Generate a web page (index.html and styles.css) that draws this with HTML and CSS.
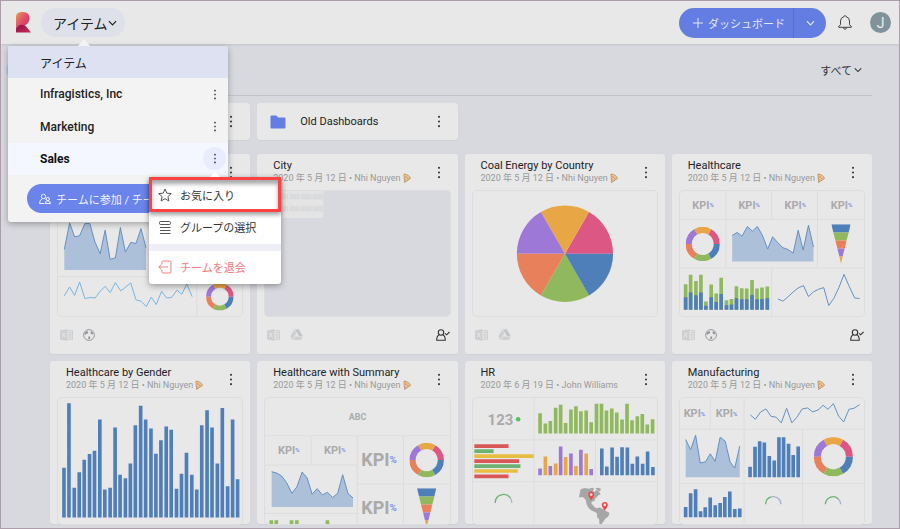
FILE: index.html
```html
<!DOCTYPE html>
<html lang="ja">
<head>
<meta charset="utf-8">
<meta name="viewport" content="width=device-width, initial-scale=1">
<title>アイテム</title>
<link rel="stylesheet" href="styles.css">
</head>
<body>
<svg class="sprite" aria-hidden="true">
  <defs>
    <linearGradient id="logo-top" x1="0" y1="0" x2="1" y2="1"><stop offset="0" stop-color="#e9a052"/><stop offset=".45" stop-color="#e0526a"/><stop offset="1" stop-color="#c9286a"/></linearGradient>
    <linearGradient id="logo-leg" x1="0" y1="0" x2="1" y2="1"><stop offset="0" stop-color="#8c1244"/><stop offset="1" stop-color="#d02a55"/></linearGradient>
  </defs>
  <symbol id="kebab" viewBox="0 0 4 14"><circle cx="2" cy="2" r="1.1"/><circle cx="2" cy="7" r="1.1"/><circle cx="2" cy="12" r="1.1"/></symbol>
  <symbol id="chevron" viewBox="0 0 10 6"><path d="M1 1l4 4 4-4" fill="none" stroke="currentColor" stroke-width="1.3"/></symbol>
  <symbol id="folder" viewBox="0 0 16 14"><path d="M1.500 .5h5l1.500 2h6.500a1 1 0 0 1 1 1v9a1 1 0 0 1-1 1h-13a1 1 0 0 1-1-1v-11a1 1 0 0 1 1-1z"/></symbol>
  <symbol id="pizza" viewBox="0 0 8 11"><path d="M1 1q5.500.8 6.500 4.500L1.500 9.500z" fill="#ecc795" stroke="#bd9366" stroke-width=".9"/><circle cx="3" cy="4" r=".8" fill="#cf8265"/><circle cx="4.800" cy="5.500" r=".7" fill="#cf8265"/><circle cx="2.800" cy="7" r=".6" fill="#cf8265"/></symbol>
  <symbol id="excel" viewBox="0 0 13 12"><path d="M0 1.500L7.500 0v12L0 10.500z" fill="#cdcfd1"/><path d="M2 3.800l3.300 4.400M5.300 3.800L2 8.200" stroke="#e8e8e8" stroke-width="1"/><path d="M7.500 1.600h5v8.800h-5" fill="none" stroke="#cdcfd1"/><path d="M8 3.800h4M8 6h4M8 8.200h4M10 2v8" stroke="#cdcfd1" stroke-width=".9"/></symbol>
  <symbol id="drive" viewBox="0 0 13 12"><path d="M4.300.5L.3 7.300l2 3.700 4.100-7z" fill="#cdcfd1"/><path d="M4.900.3h3.800l4 6.600H8.900z" fill="#c3c5c8"/><path d="M5 7.600h7.800L10.900 11H3.100z" fill="#cdcfd1"/></symbol>
  <symbol id="globe" viewBox="0 0 12 12"><circle cx="6" cy="6" r="5.400" fill="none" stroke="#8f9297" stroke-width=".9"/><path d="M2.200 3.200l2-1.200 1 1.100-.5 1.300-1.300.4L2.400 6 1.500 5zM7.800 2.200l1.800.8.6 2-1.200.5L7.500 4.300zM5.700 7.200l1.600.5-.2 1.800-1.300 1-.7-1.400z" fill="#8f9297"/></symbol>
  <symbol id="user-check" viewBox="0 0 14 12"><g fill="none" stroke="#333" stroke-width="1.100"><circle cx="5" cy="3.500" r="2.700"/><path d="M3 6Q.7 7 .7 11.300h8.600Q9.300 7 7 6M9 4.300l1.600 1.500L13.500 3"/></g></symbol>
  <symbol id="donut" viewBox="-50 -50 100 100"><g fill="none" stroke-width="18"><path stroke="#dc5784" d="M41 0A41 41 0 0 0 20.500 -35.500"/><path stroke="#e9a645" d="M20.500 -35.500A41 41 0 0 0 -20.500 -35.500"/><path stroke="#9d78d6" d="M-20.500 -35.500A41 41 0 0 0 -41 0"/><path stroke="#e9805c" d="M-41 0A41 41 0 0 0 -20.500 35.500"/><path stroke="#8fb95c" d="M-20.500 35.500A41 41 0 0 0 20.500 35.500"/><path stroke="#4f7fb9" d="M20.500 35.500A41 41 0 0 0 41 0"/></g></symbol>
  <symbol id="funnel" viewBox="0 0 58 119"><path fill="#4f7fb9" d="M0 0h58l-6 25H6z"/><path fill="#8fb95c" d="M6 25h46l-6 24H12z"/><path fill="#e9805c" d="M12 49h34l-6 24H18z"/><path fill="#9d78d6" d="M18 73h22l-6 24H24z"/><path fill="#e9a645" d="M24 97h10l-5 22z"/></symbol>
</svg>

<div class="app">
  <header class="topbar">
    <svg class="logo" viewBox="0 0 15 21" role="img" aria-label="ロゴ"><path d="M0 18V5Q0 0 6 0h1q6.500 0 6.500 6.300 0 4.700-4 6.700L0 18z" fill="url(#logo-top)"/><path d="M0 20.500V17q2-4 6-4.200 3 0 4.500 2.200l4.500 5.500z" fill="url(#logo-leg)"/></svg>
    <div class="switcher">
      <button class="switch-btn" type="button" aria-expanded="true">アイテム<svg class="chev" aria-hidden="true"><use href="#chevron"/></svg></button>
      <nav class="menu" aria-label="ワークスペース">
        <ul class="menu-list">
          <li class="menu-row current"><a href="#items">アイテム</a></li>
          <li class="menu-row"><a href="#infragistics">Infragistics, Inc</a><button class="row-more" type="button" aria-label="その他"><svg class="dots"><use href="#kebab"/></svg></button></li>
          <li class="menu-row"><a href="#marketing">Marketing</a><button class="row-more" type="button" aria-label="その他"><svg class="dots"><use href="#kebab"/></svg></button></li>
          <li class="menu-row active"><a href="#sales">Sales</a><button class="row-more on" type="button" aria-label="その他" aria-expanded="true"><svg class="dots"><use href="#kebab"/></svg></button></li>
        </ul>
        <button class="join" type="button"><svg class="join-icon" viewBox="0 0 12 12" aria-hidden="true"><g fill="none" stroke="currentColor"><circle cx="4.500" cy="3.500" r="2.200"/><path d="M5.500 10.500h-5Q.5 7 3.200 5.800M5.500 5.600l1 .8"/><circle cx="8.800" cy="6" r="1.600"/><path d="M6.300 10.500q0-2.700 2.500-2.700t2.700 2.700z"/></g></svg>チームに参加 / チーム</button>
        <div class="popover">
          <button class="pop-item marked" type="button"><svg viewBox="0 0 14 14" aria-hidden="true"><path d="M7 1l1.800 4.200 4.500.4-3.400 3 1 4.400L7 10.700 3.100 13l1-4.400-3.400-3 4.500-.4z"/></svg>お気に入り</button>
          <button class="pop-item" type="button"><svg viewBox="0 0 14 14" aria-hidden="true"><rect x="1.500" y="1.500" width="11" height="3" rx="1"/><path d="M2 7.500h10.500M2 10.500h10.500M2 13.500h10.500"/></svg>グループの選択</button>
          <button class="pop-item leave" type="button"><svg viewBox="0 0 14 14" aria-hidden="true"><path d="M4 4V2.200Q4 1 5.200 1h6.600Q13 1 13 2.200v9.600Q13 13 11.800 13H5.200Q4 13 4 11.800V10M10 7H.8M3.500 4.300L.8 7l2.700 2.700"/></svg>チームを退会</button>
        </div>
      </nav>
    </div>
    <div class="actions">
      <div class="split">
        <button class="new" type="button"><svg class="plus" viewBox="0 0 10 10" aria-hidden="true"><path d="M5 0v10M0 5h10" stroke="currentColor"/></svg>ダッシュボード</button>
        <button class="new-more" type="button" aria-label="その他の作成"><svg class="chev"><use href="#chevron"/></svg></button>
      </div>
      <button class="bell" type="button" aria-label="通知"><svg viewBox="0 0 14 15"><path d="M7 .6q.9 0 1 1Q11.500 2.500 11.500 6v3.500q0 1 1.800 1.800v1H.7v-1q1.800-.8 1.800-1.800V6Q2.500 2.500 6 1.600q.1-1 1-1zM5.300 12.500q.3 1.700 1.700 1.700t1.700-1.700" fill="none" stroke="#333" stroke-width=".9"/></svg></button>
      <button class="avatar" type="button">J</button>
    </div>
  </header>

  <main>
    <div class="toolbar"><span class="knob"></span><button class="filter" type="button">すべて<svg class="chev" aria-hidden="true"><use href="#chevron"/></svg></button></div>
    <div class="content">
      <section class="grid folders">
        <article class="folder"><svg class="folder-icon"><use href="#folder"/></svg><button class="more" type="button" aria-label="その他"><svg class="dots"><use href="#kebab"/></svg></button></article>
        <article class="folder"><svg class="folder-icon"><use href="#folder"/></svg><h2>Old Dashboards</h2><button class="more" type="button" aria-label="その他"><svg class="dots"><use href="#kebab"/></svg></button></article>
      </section>

      <section class="grid">
        <article class="card">
          <header class="head"><div></div><button class="more" type="button" aria-label="その他"><svg class="dots"><use href="#kebab"/></svg></button></header>
          <svg class="thumb" viewBox="22 -56 555 378">
            <path class="rule" d="M22 202H578M440 202V322"/>
            <path class="area" d="M41 182V120L57 40 72 82 87 79 103 42H118L133 97 149 133 164 62 179 150 195 145 210 54 225 128 241 99 257 102 272 57 287 115V182z"/>
            <path class="line" d="M41 120L57 40 72 82 87 79 103 42H118L133 97 149 133 164 62 179 150 195 145 210 54 225 128 241 99 257 102 272 57 287 115"/>
            <path class="line light" d="M41 260L57 233 72 259 87 218 103 268 118 265 134 266 149 246 164 231 179 250 195 220 211 245 241 221 257 272 272 276 288 292 303 264 318 286 334 246 349 266 364 265 380 243 395 255 410 224 426 262"/>
            <use href="#donut" x="468" y="221" width="83" height="83"/>
          </svg>
          <footer class="foot"><svg class="excel"><use href="#excel"/></svg><svg class="globe"><use href="#globe"/></svg></footer>
        </article>

        <article class="card">
          <header class="head"><div><h2>City</h2><p>2020 年 5 月 12 日 • Nhi Nguyen <svg class="pizza"><use href="#pizza"/></svg></p></div><button class="more" type="button" aria-label="その他"><svg class="dots"><use href="#kebab"/></svg></button></header>
          <svg class="thumb plain" viewBox="28 288 555 378">
            <path fill="#e4e4e4" d="M28 288H204V369H28z"/>
            <path stroke="#dadbdd" stroke-width="17" d="M28 305H204M28 341H204"/>
            <path stroke="#e4e4e4" stroke-width="3" d="M64 288V369M99 288V369M135 288V369M170 288V369"/>
          </svg>
          <footer class="foot"><svg class="excel"><use href="#excel"/></svg><svg class="drive"><use href="#drive"/></svg><svg class="shared"><use href="#user-check"/></svg></footer>
        </article>

        <article class="card">
          <header class="head"><div><h2>Coal Energy by Country</h2><p>2020 年 5 月 12 日 • Nhi Nguyen <svg class="pizza"><use href="#pizza"/></svg></p></div><button class="more" type="button" aria-label="その他"><svg class="dots"><use href="#kebab"/></svg></button></header>
          <svg class="thumb" viewBox="37 124 555 378">
            <g transform="translate(314 313)">
              <path fill="#dc5784" d="M0 0H145A145 145 0 0 0 72.500 -125.600z"/><path fill="#e9a645" d="M0 0L72.500 -125.600A145 145 0 0 0 -72.500 -125.600z"/><path fill="#9d78d6" d="M0 0L-72.500 -125.600A145 145 0 0 0 -145 0z"/><path fill="#e9805c" d="M0 0H-145A145 145 0 0 0 -72.500 125.600z"/><path fill="#8fb95c" d="M0 0L-72.500 125.600A145 145 0 0 0 72.500 125.600z"/><path fill="#4f7fb9" d="M0 0L72.500 125.600A145 145 0 0 0 145 0z"/>
            </g>
          </svg>
          <footer class="foot"><svg class="excel"><use href="#excel"/></svg><svg class="drive"><use href="#drive"/></svg></footer>
        </article>

        <article class="card">
          <header class="head"><div><h2>Healthcare</h2><p>2020 年 5 月 12 日 • Nhi Nguyen <svg class="pizza"><use href="#pizza"/></svg></p></div><button class="more" type="button" aria-label="その他"><svg class="dots"><use href="#kebab"/></svg></button></header>
          <svg class="thumb" viewBox="43 124 555 378">
            <path class="rule" d="M43 210H598M43 356H598M181 124V356M319 124V210M319 356V502M457 124V356"/>
            <text class="kpi" x="80" y="178">KPI<tspan dy="-5">%</tspan></text><text class="kpi" x="219" y="178">KPI<tspan dy="-5">%</tspan></text><text class="kpi" x="358" y="178">KPI<tspan dy="-5">%</tspan></text><text class="kpi" x="497" y="178">KPI<tspan dy="-5">%</tspan></text>
            <use href="#donut" x="60" y="232" width="103" height="103"/>
            <path class="area" d="M200 336V258L215 249 230 260 246 231 261 245 276 231 291 257 307 299 322 262 337 279 353 295 368 300 384 311 399 242 414 302 430 227 445 293V336z"/>
            <path class="line" d="M200 258L215 249 230 260 246 231 261 245 276 231 291 257 307 299 322 262 337 279 353 295 368 300 384 311 399 242 414 302 430 227 445 293"/>
            <use href="#funnel" x="499" y="224" width="58" height="119"/>
            <path class="bar green" d="M60 482V405M75 482V376M91 482V395M106 482V376M121 482V457M137 482V406M152 482V433M167 482V385M183 482V453M198 482V449M213 482V411M229 482V417M244 482V418M260 482V392M275 482V418M290 482V415M306 482V412"/>
            <path class="bar" d="M60 482V444M75 482V430M91 482V438M106 482V430M121 482V470M137 482V444M152 482V458M167 482V434M183 482V468M198 482V466M213 482V447M229 482V450M244 482V450M260 482V437M275 482V450M290 482V449M306 482V447"/>
            <path class="line" d="M338 449L353 456 368 443 384 428 399 416 415 409 430 442 445 428 460 420 476 415 491 469 506 448 522 414 537 375 553 412 569 446 584 448"/>
          </svg>
          <footer class="foot"><svg class="excel"><use href="#excel"/></svg><svg class="globe"><use href="#globe"/></svg><svg class="shared"><use href="#user-check"/></svg></footer>
        </article>

        <article class="card">
          <header class="head"><div><h2>Healthcare by Gender</h2><p>2020 年 5 月 12 日 • Nhi Nguyen <svg class="pizza"><use href="#pizza"/></svg></p></div><button class="more" type="button" aria-label="その他"><svg class="dots"><use href="#kebab"/></svg></button></header>
          <svg class="thumb" viewBox="38 130 555 378">
            <path class="bar" d="M56 490V340M71 490V146M87 490V400M102 490V354M117 490V316M133 490V299M148 490V289M164 490V195M179 490V406M195 490V400M210 490V219M225 490V361M241 490V372M256 490V327M271 490V212M287 490V153M302 490V195M318 490V222M333 490V298M348 490V257M364 490V216M379 490V226M395 490V403M410 490V358M425 490V295M441 490V361M456 490V406M471 490V212M487 490V167M502 490V219M518 490V327M533 490V160M549 490V396M564 490V195M579 490V375"/>
          </svg>
        </article>

        <article class="card">
          <header class="head"><div><h2>Healthcare with Summary</h2><p>2020 年 5 月 12 日 • Nhi Nguyen <svg class="pizza"><use href="#pizza"/></svg></p></div><button class="more" type="button" aria-label="その他"><svg class="dots"><use href="#kebab"/></svg></button></header>
          <svg class="thumb" viewBox="28 235 555 378">
            <path class="rule" d="M28 349H583M306 349V613M445 349V613M167 349V437M28 437H306M28 583H306M306 494H583"/>
            <text class="abc" x="280" y="302">ABC</text>
            <text class="kpi" x="67" y="403">KPI<tspan dy="-5">%</tspan></text><text class="kpi" x="206" y="403">KPI<tspan dy="-5">%</tspan></text>
            <text class="kpi big" x="318" y="441">KPI<tspan dy="-9">%</tspan></text><text class="kpi big" x="318" y="585">KPI<tspan dy="-9">%</tspan></text>
            <path class="area" d="M48 563V457L63 461 78 470 93 490 109 522 124 503 140 458 155 476 170 525 185 508 201 527 216 519 232 535 247 522 262 466 278 523 293 536V563z"/>
            <path class="line" d="M48 457L63 461 78 470 93 490 109 522 124 503 140 458 155 476 170 525 185 508 201 527 216 519 232 535 247 522 262 466 278 523 293 536"/>
            <use href="#donut" x="463" y="370" width="104" height="104"/>
            <use href="#funnel" x="486" y="507" width="58" height="119"/>
            <path class="bar green" d="M47 620V603M62 620V603M108 620V603M124 620V603M216 620V603"/>
          </svg>
        </article>

        <article class="card">
          <header class="head"><div><h2>HR</h2><p>2020 年 6 月 19 日 • John Williams</p></div><button class="more" type="button" aria-label="その他"><svg class="dots"><use href="#kebab"/></svg></button></header>
          <svg class="thumb" viewBox="31 130 555 378">
            <path class="rule" d="M31 256H586M31 382H586M215 130V508M400 256V382"/>
            <text class="count" x="75" y="210">123</text><circle cx="167" cy="194" r="7" fill="#56c15e"/>
            <path class="bar green" d="M233 237V176M249 237V207M264 237V199M280 237V159M295 237V150M310 237V205M326 237V165M341 237V155M356 237V170M372 237V168M387 237V203M403 237V147M418 237V147M433 237V168M449 237V162M464 237V174M480 237V195M495 237V147M510 237V197M526 237V185M541 237V178M556 237V210M572 237V194"/>
            <path class="bar red" d="M35 275H138M35 320H170M35 366H138"/><path class="bar leaf" d="M35 290H93M35 335H174"/><path class="bar yellow" d="M35 305H214M35 350H166"/>
            <path class="bar purple" d="M233 363V342M264 363V335M295 363V276M326 363V297M356 363V286M387 363V344"/><path class="bar orange" d="M249 363V306M280 363V327M310 363V308M341 363V335M372 363V297"/>
            <path class="bar" d="M419 363V282M434 363V336M450 363V279M465 363V307M480 363V278M496 363V279M511 363V328M526 363V306M542 363V328M557 363V291M573 363V338"/>
            <path class="gauge" d="M98 446A25 25 0 0 1 144 432"/><path class="gauge rest" d="M144 432Q148 438 148 446"/>
            <path fill="#a6a6a6" d="M355 405l12-4 12 2 12-3 5 4-4 6 4 4 6-6 6 1 4 6 4 5-6 2-6 6-6 6-1 6-5 1-5 3 2 6 4 3 4 6 7 3 8-2 12 5 9 6 9 5-2 8-5 6-6 4-4 7-5 5-1 10-3 2-4-8-1-14-7-9 1-9-8-5-9-4-8-7-7-12-2-13-7-7-7-2-7 2z"/>
            <path fill="#a6a6a6" d="M399 402l10-2 8 4-4 7-7-3z"/>
            <g fill="#ea4b4b"><path d="M387 438q-9-11-9-17a9 9 0 0 1 18 0q0 6-9 17z"/><path d="M428 469q-9-11-9-17a9 9 0 0 1 18 0q0 6-9 17z"/></g><circle cx="387" cy="421" r="4" fill="#e8e8e8"/><circle cx="428" cy="452" r="4" fill="#e8e8e8"/>
          </svg>
        </article>

        <article class="card">
          <header class="head"><div><h2>Manufacturing</h2><p>2020 年 5 月 12 日 • Nhi Nguyen <svg class="pizza"><use href="#pizza"/></svg></p></div><button class="more" type="button" aria-label="その他"><svg class="dots"><use href="#kebab"/></svg></button></header>
          <svg class="thumb" viewBox="43 130 555 378">
            <path class="rule" d="M43 224H598M43 388H598M134 130V224M236 130V508M412 224V508"/>
            <text class="kpi" x="54" y="188">KPI<tspan dy="-5">%</tspan></text><text class="kpi" x="151" y="188">KPI<tspan dy="-5">%</tspan></text>
            <path class="line" d="M255 181L270 194 286 172 302 163 317 185 333 188 348 205 364 161 380 205 395 188 411 163 427 160 443 172 459 166 474 152 489 164 505 147 521 185 536 202 552 164 567 161 584 150"/>
            <path class="area" d="M60 369V255L75 286 90 242 104 326 120 322 134 298 149 321 164 248 179 260 194 323 208 341 223 275V369z"/>
            <path class="line" d="M60 255L75 286 90 242 104 326 120 322 134 298 149 321 164 248 179 260 194 323 208 341 223 275"/>
            <path class="bar" d="M254 369V337M269 369V277M283 369V260M297 369V264M312 369V305M327 369V318M341 369V248M355 369V248M370 369V268M384 369V302M399 369V276"/>
            <use href="#donut" x="446" y="248" width="118" height="118"/>
            <path class="bar" d="M60 489V458M75 489V417M90 489V405M105 489V471M119 489V459M134 489V430M149 489V453M164 489V446M178 489V428M193 489V412M208 489V464M223 489V463"/>
            <path class="gauge" d="M301 450A23 23 0 0 1 318 428"/><path class="gauge rest" d="M318 428A23 23 0 0 1 347 450"/>
            <path class="gauge" d="M481 450A23 23 0 0 1 520 434"/><path class="gauge rest" d="M520 434A23 23 0 0 1 527 450"/>
          </svg>
        </article>
      </section>
    </div>
  </main>
</div>
</body>
</html>
```
FILE: styles.css
```css
* { box-sizing: border-box; }

body {
  margin: 0;
  font-family: Roboto, "Noto Sans CJK JP", sans-serif;
  font-size: 11px;
  color: #333;
  background: #d8d9df;
}

h2, p, ul { margin: 0; padding: 0; }
li { list-style: none; }
a { color: inherit; text-decoration: none; }

button {
  margin: 0;
  padding: 0;
  border: 0;
  background: none;
  color: inherit;
  font: inherit;
  white-space: nowrap;
}

svg { display: block; flex: none; }
.sprite { position: absolute; width: 0; height: 0; }

.app {
  height: 100vh;
  overflow: hidden;
  border: 1px solid #ad9dab;
}

/* Top bar */
.topbar {
  position: relative;
  z-index: 2;
  display: flex;
  align-items: center;
  height: 43px;
  padding: 0 8px 0 15px;
  background: #e8e8e8;
  box-shadow: 0 1px 2px #c4c5cb;
}

.logo { width: 15px; height: 21px; }
.switcher { position: relative; margin-left: 10px; }

.switch-btn {
  display: flex;
  align-items: center;
  height: 29px;
  padding: 0 8px 0 12px;
  border-radius: 15px;
  background: #dee1e9;
  color: #222;
  font-size: 14px;
}

.chev { width: 9px; height: 6px; }
.actions { display: flex; align-items: center; margin-left: auto; }

.split {
  display: flex;
  height: 30px;
  overflow: hidden;
  border-radius: 15px;
  background: #647de3;
  color: #e4e7f4;
}

.new {
  display: flex;
  align-items: center;
  gap: 5px;
  padding: 0 8px 0 14px;
}

.plus { width: 10px; height: 10px; }

.new-more {
  display: grid;
  place-items: center;
  width: 33px;
  border-left: 1px solid #556dcb;
}

.bell { margin: 0 18px 0 12px; }
.bell svg { width: 14px; height: 15px; }

.avatar {
  width: 21px;
  height: 21px;
  border-radius: 50%;
  background: #80939b;
  color: #eee;
  font-size: 14px;
}

/* Workspace menu */
.menu {
  position: absolute;
  top: 38px;
  left: -33px;
  width: 220px;
  border-radius: 3px;
  background: #f3f3f3;
  box-shadow: 0 2px 6px rgba(0, 0, 0, .3);
}

.menu::before {
  content: "";
  position: absolute;
  top: -7px;
  left: 70px;
  border: 6px solid transparent;
  border-top: 0;
  border-bottom: 7px solid #f3f3f3;
}

.menu-list { display: grid; grid-auto-rows: 1fr; height: 129px; }

.menu-row {
  display: flex;
  align-items: center;
  justify-content: space-between;
  padding: 0 2px 0 32px;
  color: #222;
  font-size: 12px;
  font-weight: 500;
}

.current { border-radius: 3px 3px 0 0; background: #dee1f2; font-weight: 400; }
.active { background: #f4f7ff; color: #111; font-weight: 700; }

.row-more {
  display: grid;
  place-items: center;
  width: 23px;
  height: 23px;
  border-radius: 50%;
}

.row-more .dots { height: 11px; }
.on { background: #e9ecfc; }
.dots { width: 4px; height: 13px; fill: #333; }

.join {
  display: flex;
  align-items: center;
  gap: 5px;
  width: 182px;
  height: 29px;
  margin: 9px 19px;
  padding: 0 12px;
  border-radius: 15px;
  background: #6a84ec;
  color: #f2f4ff;
}

.join-icon { width: 12px; height: 12px; }

/* Row actions */
.popover {
  position: absolute;
  top: 131px;
  left: 141px;
  width: 132px;
  border-radius: 3px;
  background: #fff;
  box-shadow: 0 2px 6px rgba(0, 0, 0, .35);
}

.popover::before {
  content: "";
  position: absolute;
  top: -5px;
  left: 61px;
  border: 5px solid transparent;
  border-top: 0;
  border-bottom-color: #fff;
}

.pop-item {
  display: flex;
  align-items: center;
  gap: 8px;
  width: 100%;
  height: 32px;
  padding: 0 9px 2px;
}

.pop-item svg { width: 14px; height: 14px; fill: none; stroke: #555; }

.marked {
  position: relative;
  height: 35px;
  padding: 0 6px;
  border: 3px solid #fb4343;
  box-shadow: 0 3px 4px rgba(0, 0, 0, .35), inset 0 4px 4px rgba(0, 0, 0, .35);
}

.leave { height: 40px; border-top: 7px solid #edeef6; color: #ef7d80; }
.leave svg { stroke: #ef7d80; }

/* Content */
.toolbar {
  display: flex;
  align-items: center;
  justify-content: space-between;
  height: 51px;
  padding: 0 37px 0 5px;
}

.knob { width: 22px; height: 22px; border-radius: 50%; background: #bdcae4; }
.filter { display: flex; align-items: center; gap: 2px; }
.filter .chev { width: 8px; }

.content { margin: 0 27px 0 49px; padding-top: 7px; border-top: 1px solid #c3c4c9; }
.grid { display: grid; grid-template-columns: repeat(4, 1fr); gap: 7px; }
.folders { margin-bottom: 14px; }

.folder, .card {
  border-radius: 3px;
  background: #e8e8e8;
  box-shadow: 0 1px 1px #cfd0d5;
}

.folder { display: flex; align-items: center; height: 37px; padding: 0 8px 0 13px; }
.folder-icon { width: 16px; height: 14px; margin-right: 14px; fill: #647de3; }
h2 { color: #222; font-size: 11px; font-weight: 400; line-height: 13px; }
.more { display: grid; place-items: center; width: 22px; height: 24px; margin-left: auto; }

.card { padding: 0 8px; }
.head { display: flex; height: 37px; padding: 5px 0 0 8px; }
.head .more { margin-top: 1px; }

p {
  display: flex;
  align-items: center;
  gap: 2px;
  height: 13px;
  color: #999;
  font-size: 9px;
  line-height: 13px;
  white-space: nowrap;
}

.pizza { width: 8px; height: 11px; }

.thumb {
  width: 100%;
  border-radius: 4px;
  box-shadow: 0 0 0 1px #dddddf;
}

.plain { background: #d8d9df; }
.foot { display: flex; align-items: center; height: 38px; padding-left: 2px; }
.excel, .drive { width: 13px; height: 12px; }
.excel { margin-right: 10px; }
.globe { width: 12px; height: 12px; }
.shared { width: 14px; height: 12px; margin-left: auto; }

/* Chart drawings */
.rule { fill: none; stroke: #dddddf; stroke-width: 3; }
.area { fill: #adc0d9; }
.line { fill: none; stroke: #648fc1; stroke-width: 3; }
.light { stroke: #78b3dd; }
.bar { stroke: #4f7fb9; stroke-width: 11; }
.green { stroke: #8fb95c; }
.purple { stroke: #9d78d6; }
.orange { stroke: #e9a645; }
.red { stroke: #d95757; }
.leaf { stroke: #6db272; }
.yellow { stroke: #e7bd42; }
.gauge { fill: none; stroke: #6db272; stroke-width: 4; }
.rest { stroke: #a9afd0; }
.kpi { fill: #aaa; font-size: 33px; font-weight: 700; }
.kpi tspan { fill: #8291e6; font-size: 18px; }
.big { font-size: 54px; }
.big tspan { font-size: 30px; }
.abc { fill: #aaa; font-size: 27px; font-weight: 700; }
.count { fill: #aaa; font-size: 45px; font-weight: 700; }
```
